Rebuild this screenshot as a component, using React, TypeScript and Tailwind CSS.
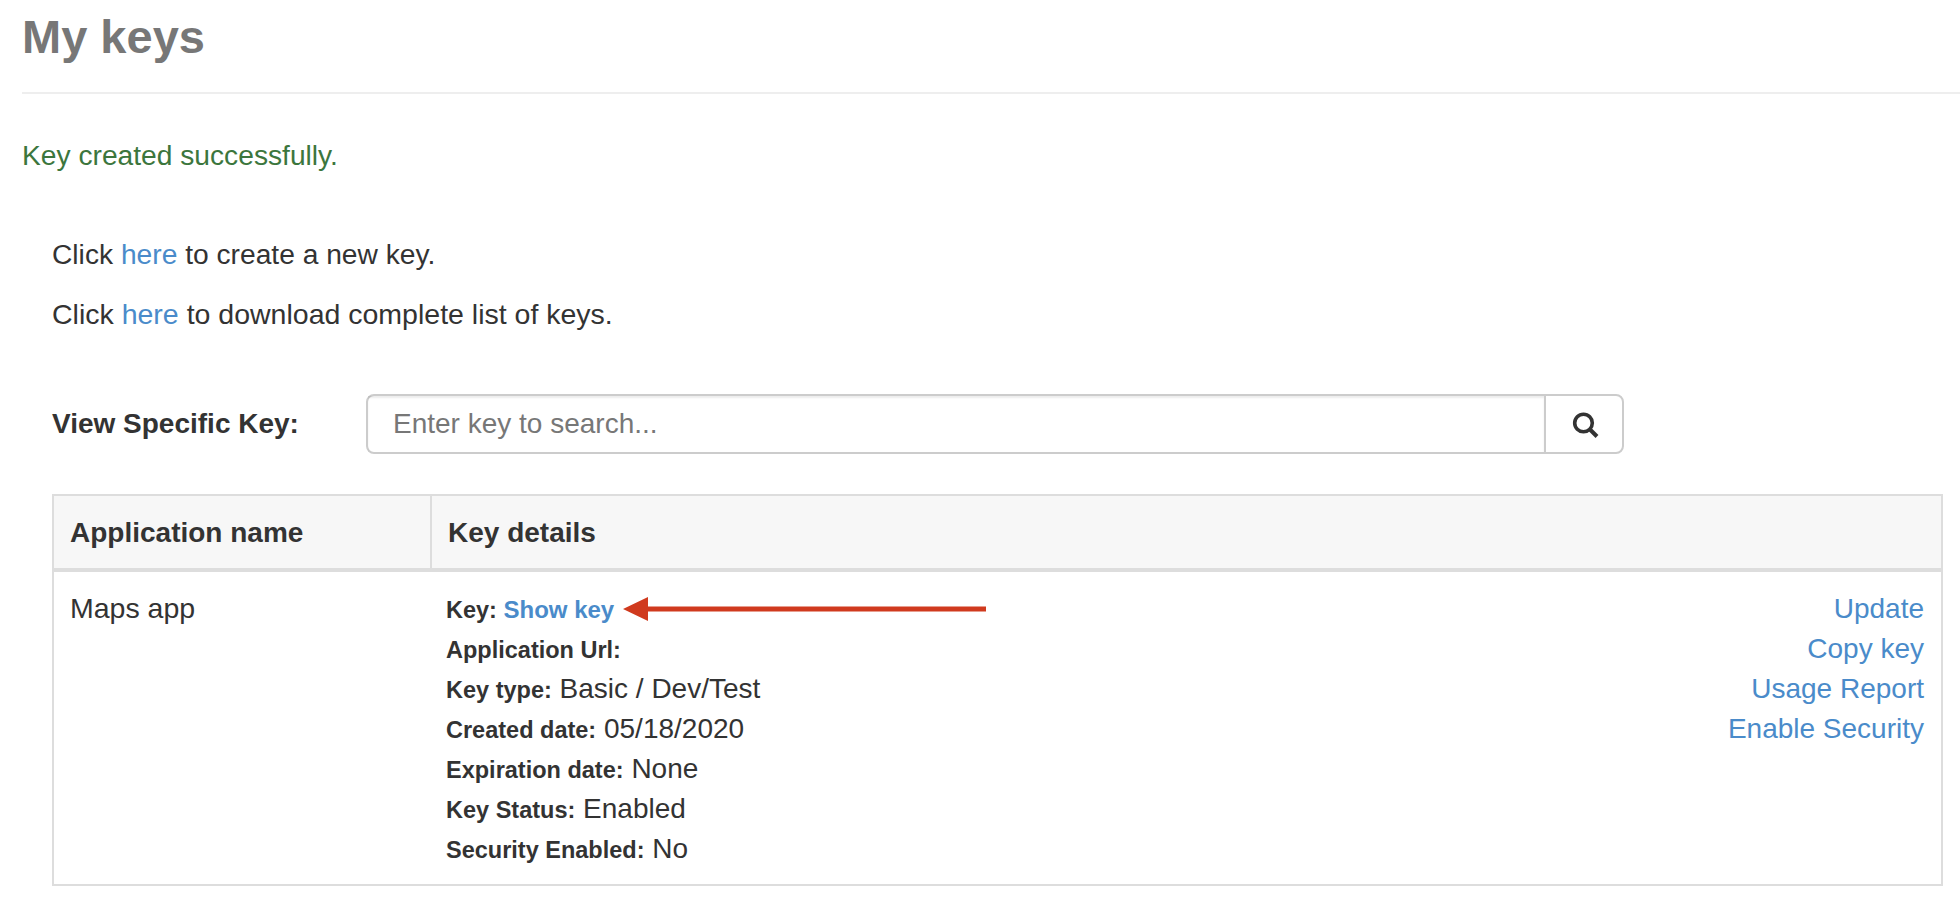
const details = [
  { label: 'Application Url:', value: '' },
  { label: 'Key type:', value: 'Basic / Dev/Test' },
  { label: 'Created date:', value: '05/18/2020' },
  { label: 'Expiration date:', value: 'None' },
  { label: 'Key Status:', value: 'Enabled' },
  { label: 'Security Enabled:', value: 'No' },
];

const actions = ['Update', 'Copy key', 'Usage Report', 'Enable Security'];

const App = () => {
  return (
    <div className="h-[910px] overflow-hidden bg-white pl-[22px] font-['Liberation_Sans',Arial,sans-serif] text-[28px] leading-[40px] text-[#333333]">
      {/* Page title */}
      <h1 className="border-b-2 border-[#eeeeee] pt-[11px] pb-[29px] text-[47px] leading-[52px] font-bold text-[#777777]">
        My keys
      </h1>

      <p className="mt-[41px] text-[28.2px] text-[#3c763d]">Key created successfully.</p>

      <div className="mt-[59px] pr-[17px] pl-[30px]">
        <p className="text-[28.2px]">
          Click <a className="text-[#4a8bca]">here</a> to create a new key.
        </p>
        <p className="mt-[20px] text-[28.5px]">
          Click <a className="text-[#4a8bca]">here</a> to download complete list of keys.
        </p>

        {/* Search */}
        <div className="mt-[60px] flex items-center">
          <label className="w-[314px] font-bold">View Specific Key:</label>
          <div className="flex h-[60px] w-[1258px] rounded-lg border-2 border-[#cccccc]">
            <div className="flex-1 pl-[25px] leading-[56px] text-[#777777] shadow-[inset_0_2px_2px_rgba(0,0,0,0.075)]">
              Enter key to search...
            </div>
            <button className="flex w-[78px] items-center justify-center border-l-2 border-[#cccccc] pt-[2px] pl-[3px]">
              <svg width="28" height="28" viewBox="0 0 28 28" fill="none" stroke="#333333" strokeWidth="3.6">
                <circle cx="11.5" cy="12" r="8.8" />
                <path d="M18 18.5 L25 25.5" strokeWidth="4" />
              </svg>
            </button>
          </div>
        </div>

        {/* Keys table */}
        <table className="mt-[40px] w-full border-collapse border-2 border-[#dddddd]">
          <thead>
            <tr className="border-b-4 border-[#dddddd] bg-[#f7f7f7] text-left">
              <th className="w-[378px] border-r-2 border-[#dddddd] px-[16px] pt-[17px] pb-[15px] font-bold">Application name</th>
              <th className="px-[16px] pt-[17px] pb-[15px] font-bold">Key details</th>
            </tr>
          </thead>
          <tbody>
            <tr className="align-top">
              <td className="p-[16px] text-[28.5px]">Maps app</td>
              <td className="pt-[17px] pr-[17px] pb-[15px] pl-[15px]">
                <div className="flex justify-between">
                  <div>
                    <div className="relative">
                      <b className="text-[23.5px] leading-none">Key: </b>
                      <a className="text-[24px] leading-none font-bold text-[#4a8bca]">Show key</a>
                      <svg className="absolute top-[8px] left-[177px]" width="363" height="24" viewBox="0 0 363 24">
                        <path d="M0 12 L25 0 L25 9.5 L363 9.5 L363 14.5 L25 14.5 L25 24 Z" fill="#d03a1e" />
                      </svg>
                    </div>
                    {details.map((item) => (
                      <div key={item.label}>
                        <b className="text-[23.5px] leading-none">{item.label}</b> {item.value}
                      </div>
                    ))}
                  </div>
                  <div className="text-right text-[#4a8bca]">
                    {actions.map((action) => (
                      <div key={action}>
                        <a>{action}</a>
                      </div>
                    ))}
                  </div>
                </div>
              </td>
            </tr>
          </tbody>
        </table>
      </div>
    </div>
  );
};

export default App;
